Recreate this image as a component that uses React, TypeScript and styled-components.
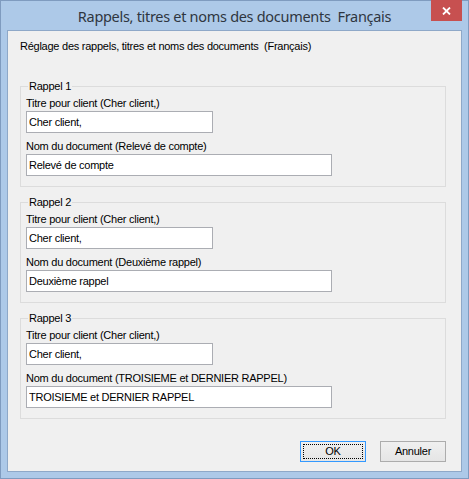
import React from 'react';
import styled, { createGlobalStyle } from 'styled-components';

const GlobalStyle = createGlobalStyle`
  html, body {
    margin: 0;
    padding: 0;
    background: #ffffff;
  }
  * {
    box-sizing: border-box;
  }
`;

const Window = styled.div`
  width: 469px;
  height: 479px;
  border: 1px solid #7f9bbf;
  background: #adc9e8;
  display: flex;
  flex-direction: column;
  font-family: 'Liberation Sans', Arial, sans-serif;
  font-size: 11px;
  letter-spacing: -0.25px;
  color: #000;
`;

const TitleBar = styled.div`
  height: 29px;
  display: grid;
  grid-template-columns: 1fr auto 1fr;
  align-items: start;
`;

const Title = styled.div`
  grid-column: 2;
  font-family: 'Noto Sans', 'Open Sans', sans-serif;
  font-size: 14.5px;
  letter-spacing: -0.3px;
  line-height: 20px;
  padding-top: 5px;
  color: #2f3640;
  white-space: pre;
`;

const CloseButton = styled.div`
  grid-column: 3;
  justify-self: end;
  width: 31px;
  height: 21px;
  margin-top: -1px;
  margin-right: 6px;
  background: #c75050;
  display: flex;
  align-items: center;
  justify-content: center;
`;

const Client = styled.div`
  flex: 1;
  margin: 0 6px 6px;
  border: 1px solid #8ea8c8;
  background: #f0f0f0;
  padding: 9px 15px 0 12px;
  display: flex;
  flex-direction: column;
`;

const Intro = styled.div`
  line-height: 13px;
  white-space: pre;
  margin-bottom: 26.5px;
`;

const Group = styled.fieldset`
  margin: 0 0 9px;
  padding: 4px 5px 10px;
  border: 1px solid #dcdcdc;
  min-width: 0;

  &:last-of-type {
    margin-bottom: 0;
  }
`;

const Legend = styled.legend`
  margin-left: 2px;
  padding: 0 1px;
  line-height: 13px;
`;

const FieldLabel = styled.label`
  display: block;
  line-height: 13px;
  margin-bottom: 1px;
`;

const TextBox = styled.input<{ $wide?: boolean }>`
  display: block;
  width: ${p => (p.$wide ? '306px' : '187px')};
  height: 22px;
  margin: 0 0 7px;
  padding: 0 2px;
  border: 1px solid #abadb3;
  background: #fff;
  font-family: 'Liberation Sans', Arial, sans-serif;
  font-size: 11px;
  letter-spacing: -0.25px;
  color: #000;
  outline: none;

  &:last-child {
    margin-bottom: 0;
  }
`;

const ButtonRow = styled.div`
  display: flex;
  justify-content: flex-end;
  gap: 14px;
  margin-top: 22px;
`;

const Button = styled.button<{ $focused?: boolean }>`
  width: 66px;
  height: 21px;
  padding: 0;
  border: 1px solid ${p => (p.$focused ? '#3399ff' : '#acacac')};
  background: linear-gradient(#f0f0f0, #e5e5e5);
  font-family: 'Liberation Sans', Arial, sans-serif;
  font-size: 11px;
  letter-spacing: -0.25px;
  color: #000;
  outline: ${p => (p.$focused ? '1px dotted #000' : 'none')};
  outline-offset: -4px;
`;

const reminders = [
  { title: 'Rappel 1', doc: 'Relevé de compte' },
  { title: 'Rappel 2', doc: 'Deuxième rappel' },
  { title: 'Rappel 3', doc: 'TROISIEME et DERNIER RAPPEL' },
];

export default function App() {
  return (
    <>
      <GlobalStyle />
      <Window>
        <TitleBar>
          <Title>{'Rappels, titres et noms des documents  Français'}</Title>
          <CloseButton>
            <svg width="9" height="8" viewBox="0 0 9 8">
              <path d="M1 0.5 L8 7.5 M8 0.5 L1 7.5" stroke="#fff" strokeWidth="1.8" />
            </svg>
          </CloseButton>
        </TitleBar>
        <Client>
          <Intro>{'Réglage des rappels, titres et noms des documents  (Français)'}</Intro>
          {reminders.map(r => (
            <Group key={r.title}>
              <Legend>{r.title}</Legend>
              <FieldLabel>Titre pour client (Cher client,)</FieldLabel>
              <TextBox defaultValue="Cher client," />
              <FieldLabel>Nom du document ({r.doc})</FieldLabel>
              <TextBox $wide defaultValue={r.doc} />
            </Group>
          ))}
          <ButtonRow>
            <Button $focused>OK</Button>
            <Button>Annuler</Button>
          </ButtonRow>
        </Client>
      </Window>
    </>
  );
}
